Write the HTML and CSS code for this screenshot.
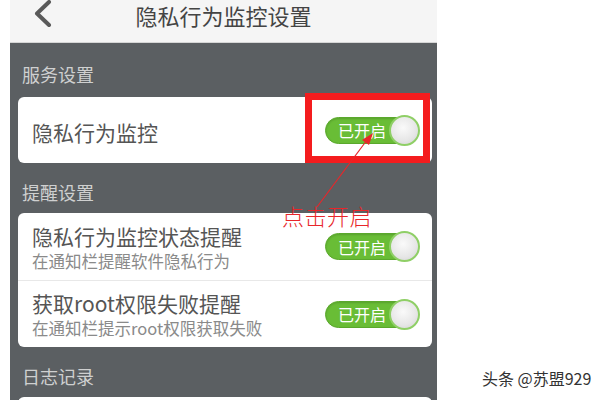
FILE: index.html
```html
<!DOCTYPE html>
<html lang="zh-CN">
<head>
    <meta charset="UTF-8">
    <meta name="viewport" content="width=device-width, initial-scale=1.0">
    <title>隐私行为监控设置</title>
    <link rel="stylesheet" href="styles.css">
</head>
<body>
    <div class="page">
        <div class="phone">
            <header class="topbar">
                <span class="back">
                    <svg width="20" height="28" viewBox="0 0 20 28">
                        <polyline points="16,2 4,13.5 16,25" fill="none" stroke="#5a5a5a" stroke-width="4" stroke-linecap="round" stroke-linejoin="round"/>
                    </svg>
                </span>
                <h1>隐私行为监控设置</h1>
                <span class="spacer"></span>
            </header>

            <main class="content">
                <div class="group-title">服务设置</div>
                <div class="card">
                    <div class="row row-single">
                        <div class="row-title">隐私行为监控</div>
                        <span class="switch"><span class="switch-label">已开启</span><span class="thumb"></span></span>
                    </div>
                </div>

                <div class="group-title">提醒设置</div>
                <div class="card">
                    <div class="row">
                        <div class="row-text">
                            <div class="row-title">隐私行为监控状态提醒</div>
                            <div class="row-sub">在通知栏提醒软件隐私行为</div>
                        </div>
                        <span class="switch"><span class="switch-label">已开启</span><span class="thumb"></span></span>
                    </div>
                    <div class="row">
                        <div class="row-text">
                            <div class="row-title">获取root权限失败提醒</div>
                            <div class="row-sub">在通知栏提示root权限获取失败</div>
                        </div>
                        <span class="switch"><span class="switch-label">已开启</span><span class="thumb"></span></span>
                    </div>
                </div>

                <div class="group-title">日志记录</div>
                <div class="card card-cut"></div>
            </main>

            <!-- annotation drawn over the screenshot -->
            <div class="highlight"></div>
            <svg class="arrow" width="427" height="400" viewBox="0 0 427 400">
                <line x1="307" y1="207" x2="360" y2="136" stroke="#e8262a" stroke-width="1.2"/>
                <polygon points="363,133 352,140 359,145" fill="#e8262a"/>
            </svg>
            <div class="note">点击开启</div>
        </div>

        <div class="watermark">头条 @苏盟929</div>
    </div>
</body>
</html>
```

FILE: styles.css
```css
body {
    margin: 0;
    background: #fff;
    font-family: "Noto Sans CJK SC", "Noto Sans", sans-serif;
}
.page {
    position: relative;
    width: 600px;
    height: 400px;
    overflow: hidden;
}
.phone {
    position: relative;
    width: 427px;
    height: 400px;
    margin-left: 10px;
    background: #5b5f62;
    overflow: hidden;
}
.topbar {
    display: flex;
    align-items: flex-start;
    height: 42px;
    background: #f5f5f5;
    border-bottom: 1px solid #d6d6d6;
}
.back {
    width: 20px;
    height: 28px;
    padding-left: 23px;
}
.spacer {
    width: 43px;
}
.topbar h1 {
    flex: 1;
    margin: 0;
    text-align: center;
    font-size: 22px;
    font-weight: normal;
    line-height: 30px;
    color: #444;
}
.content {
    padding: 0 5px 0 8px;
}
.group-title {
    box-sizing: border-box;
    height: 54px;
    padding: 8px 0 0 4px;
    display: flex;
    align-items: center;
    font-size: 18px;
    color: #cfd0d0;
}
.card + .group-title {
    height: 50px;
}
.card {
    background: #fff;
    border-radius: 6px;
}
.card-cut {
    height: 20px;
}
.row {
    display: flex;
    align-items: center;
    justify-content: space-between;
    height: 67px;
    padding: 0 13px 0 14px;
}
.row + .row {
    border-top: 1px solid #e8e8e8;
    height: 66px;
}
.row-single {
    height: 66px;
}
.row-title {
    font-size: 21px;
    line-height: 26px;
    color: #555;
}
.row-single .row-title {
    padding-top: 4px;
}
.row-sub {
    margin-top: 2px;
    font-size: 16.5px;
    line-height: 20px;
    color: #8a8a8a;
}
.switch {
    position: relative;
    box-sizing: border-box;
    width: 94px;
    height: 27px;
    border-radius: 14px;
    background: #69bd36;
    border: 1px solid #5aa82c;
    box-shadow: inset 0 1px 2px rgba(0,0,0,0.15);
    display: flex;
    align-items: center;
}
.switch-label {
    padding-left: 12px;
    font-size: 16px;
    line-height: 20px;
    color: #fff;
}
.thumb {
    position: absolute;
    right: -2px;
    top: -3px;
    box-sizing: border-box;
    width: 31px;
    height: 31px;
    border-radius: 50%;
    border: 2px solid #8fcf66;
    background: radial-gradient(circle at 45% 40%, #fafafa 0%, #e6e6e6 60%, #cfcfcf 100%);
}
.highlight {
    position: absolute;
    left: 295px;
    top: 93px;
    width: 125px;
    height: 70px;
    box-sizing: border-box;
    border: 7px solid #f41c1e;
}
.arrow {
    position: absolute;
    left: 0;
    top: 0;
}
.note {
    position: absolute;
    left: 272px;
    top: 201px;
    font-size: 22px;
    line-height: 28px;
    font-weight: 300;
    letter-spacing: 0.5px;
    color: #e8262a;
}
.watermark {
    position: absolute;
    left: 482px;
    top: 368px;
    font-size: 16px;
    line-height: 20px;
    color: #333;
}
```
